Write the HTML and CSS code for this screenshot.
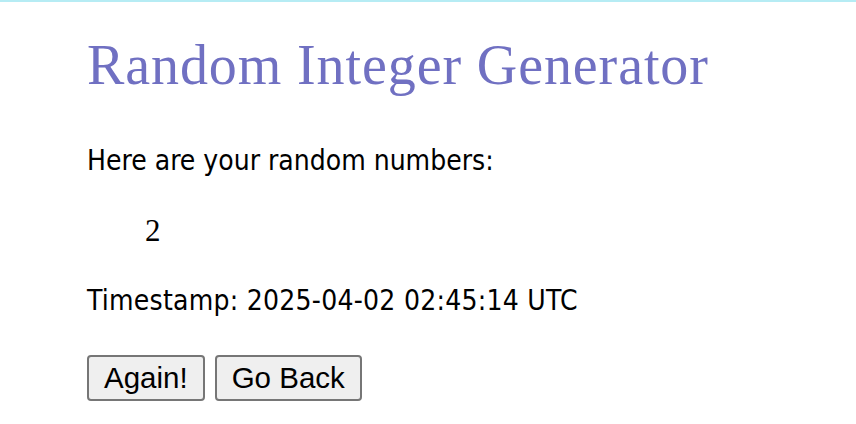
FILE: index.html
```html
<!DOCTYPE html>
<html>
<head>
<meta charset="utf-8">
<link rel="stylesheet" href="styles.css">
</head>
<body>
<div class="page">
  <h1 class="title">Random Integer Generator</h1>
  <p class="intro">Here are your random numbers:</p>
  <pre class="numbers">2</pre>
  <p class="stamp">Timestamp: 2025-04-02 02:45:14 UTC</p>
  <div class="actions">
    <button class="btn">Again!</button>
    <button class="btn">Go Back</button>
  </div>
</div>
</body>
</html>
```
FILE: styles.css
```css
html, body { margin: 0; padding: 0; background: #fff; }
body { border-top: 2px solid #b6ecf4; }
.page { padding: 0 0 0 87px; font-family: "DejaVu Sans Condensed", "DejaVu Sans", sans-serif; font-stretch: condensed; color: #000; }
.title { font-family: "Liberation Serif", serif; font-weight: normal; font-size: 56px; letter-spacing: 0.9px; color: #7070c2; margin: 33px 0 0 0; line-height: 60px; }
.intro { font-size: 28px; margin: 50px 0 0 0; line-height: 32px; }
.numbers { font-family: "Liberation Serif", serif; font-size: 31px; margin: 38px 0 0 58px; line-height: 32px; }
.stamp { font-size: 28px; letter-spacing: 0.25px; margin: 38px 0 0 0; line-height: 32px; }
.actions { margin-top: 38px; display: flex; gap: 10px; }
.btn { font-family: "Liberation Sans", sans-serif; font-size: 29.5px; padding: 4px 15px; background: #efefef; border: 2px solid #767676; border-radius: 4px; color: #000; }
```
